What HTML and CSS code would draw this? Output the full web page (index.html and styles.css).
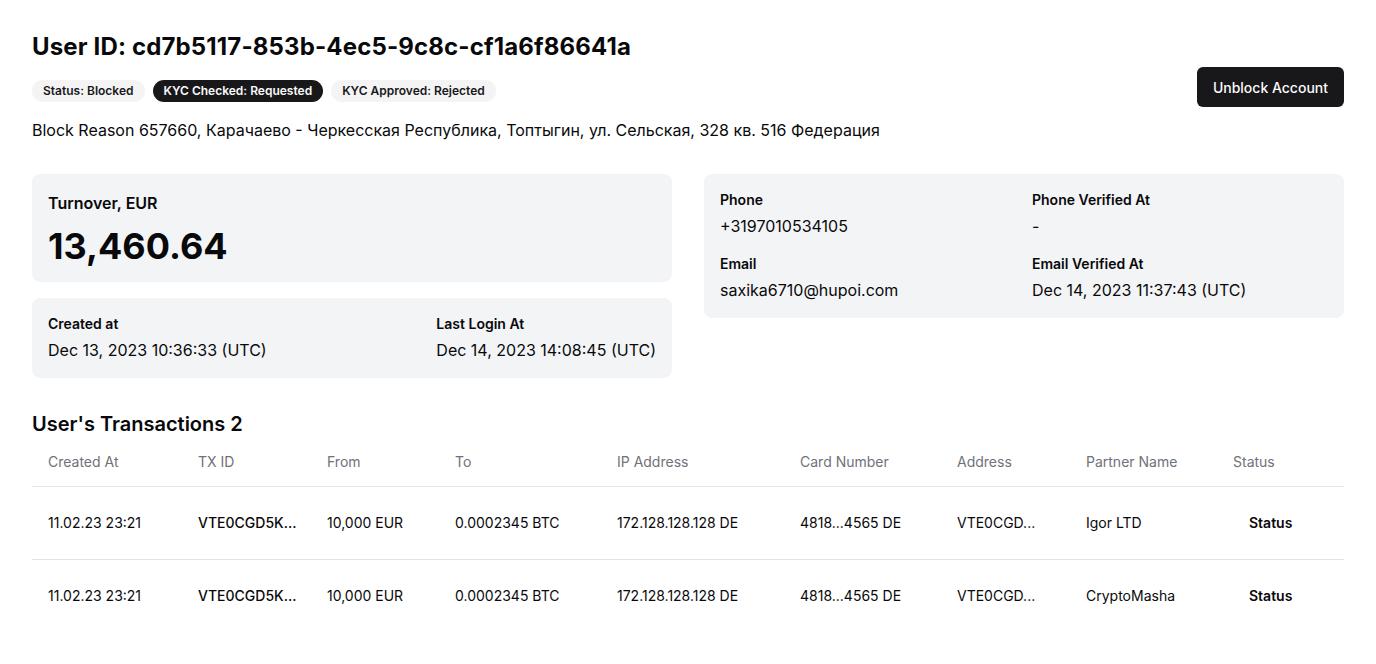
FILE: index.html
```html
<!DOCTYPE html>
<html lang="en">
<head>
<meta charset="utf-8">
<title>User</title>
<link rel="stylesheet" href="styles.css">
</head>
<body>
<main class="page">
  <header class="header">
    <div class="header-info">
      <h1 class="title">User ID: cd7b5117-853b-4ec5-9c8c-cf1a6f86641a</h1>
      <div class="badges">
        <span class="badge">Status: Blocked</span>
        <span class="badge badge-dark">KYC Checked: Requested</span>
        <span class="badge">KYC Approved: Rejected</span>
      </div>
      <p class="reason">Block Reason 657660, Карачаево - Черкесская Республика, Топтыгин, ул. Сельская, 328 кв. 516 Федерация</p>
    </div>
    <button class="btn-primary">Unblock Account</button>
  </header>

  <section class="cards">
    <div class="col">
      <div class="card card-turnover">
        <div class="turnover-label">Turnover, EUR</div>
        <div class="turnover-value">13,460.64</div>
      </div>
      <div class="card card-dates">
        <div class="field">
          <div class="label">Created at</div>
          <div class="value">Dec 13, 2023 10:36:33 (UTC)</div>
        </div>
        <div class="field">
          <div class="label">Last Login At</div>
          <div class="value">Dec 14, 2023 14:08:45 (UTC)</div>
        </div>
      </div>
    </div>
    <div class="col">
      <div class="card card-grid">
        <div class="field">
          <div class="label">Phone</div>
          <div class="value">+3197010534105</div>
        </div>
        <div class="field">
          <div class="label">Phone Verified At</div>
          <div class="value">-</div>
        </div>
        <div class="field">
          <div class="label">Email</div>
          <div class="value">saxika6710@hupoi.com</div>
        </div>
        <div class="field">
          <div class="label">Email Verified At</div>
          <div class="value">Dec 14, 2023 11:37:43 (UTC)</div>
        </div>
      </div>
    </div>
  </section>

  <h2 class="section-title">User's Transactions 2</h2>
  <table class="tx">
    <colgroup>
      <col class="c1"><col class="c2"><col class="c3"><col class="c4"><col class="c5"><col class="c6"><col class="c7"><col class="c8"><col class="c9">
    </colgroup>
    <thead>
      <tr>
        <th>Created At</th><th>TX ID</th><th>From</th><th>To</th><th>IP Address</th><th>Card Number</th><th>Address</th><th>Partner Name</th><th>Status</th>
      </tr>
    </thead>
    <tbody>
      <tr>
        <td>11.02.23 23:21</td><td class="strong">VTE0CGD5K...</td><td>10,000 EUR</td><td>0.0002345 BTC</td><td>172.128.128.128 DE</td><td>4818...4565 DE</td><td>VTE0CGD...</td><td>Igor LTD</td><td class="status-cell"><button class="btn-ghost">Status</button></td>
      </tr>
      <tr>
        <td>11.02.23 23:21</td><td class="strong">VTE0CGD5K...</td><td>10,000 EUR</td><td>0.0002345 BTC</td><td>172.128.128.128 DE</td><td>4818...4565 DE</td><td>VTE0CGD...</td><td>CryptoMasha</td><td class="status-cell"><button class="btn-ghost">Status</button></td>
      </tr>
    </tbody>
  </table>
</main>
</body>
</html>
```

FILE: styles.css
```css
* { box-sizing: border-box; }
html, body { margin: 0; padding: 0; background: #ffffff; }
body {
  font-family: Inter, "Noto Sans", "DejaVu Sans", sans-serif;
  color: #09090b;
  font-size: 16px;
  line-height: 24px;
}
.page { padding: 32px 32px 0 32px; }

.header { display: flex; align-items: center; justify-content: space-between; }
.title { margin: 0; font-size: 24px; line-height: 30px; font-weight: 700; letter-spacing: 0.15px; }
.badges { display: flex; gap: 8px; margin-top: 18px; }
.badge {
  display: inline-flex; align-items: center;
  height: 22px; padding: 0 11px; border-radius: 999px;
  background: #f4f4f5; color: #18181b;
  font-size: 12px; font-weight: 600; line-height: 16px;
}
.badge-dark { background: #18181b; color: #fafafa; }
.reason { margin: 16px 0 0; font-size: 16px; line-height: 24px; }

.btn-primary {
  height: 40px; padding: 0 16px; border: 0; border-radius: 6px;
  background: #18181b; color: #fafafa;
  font-family: inherit; font-size: 14px; font-weight: 500;
}

.cards { display: grid; grid-template-columns: 1fr 1fr; gap: 32px; margin-top: 32px; align-items: start; }
.col { display: flex; flex-direction: column; gap: 16px; }
.card { background: #f3f4f6; border-radius: 8px; padding: 16px; }
.turnover-label { font-size: 16px; line-height: 24px; font-weight: 600; padding-top: 1px; }
.turnover-value { margin-top: 11px; font-size: 36px; line-height: 40px; font-weight: 700; }

.card-dates { display: flex; justify-content: space-between; }
.card-grid { display: grid; grid-template-columns: 1fr 1fr; column-gap: 16px; row-gap: 16px; }
.field { display: flex; flex-direction: column; gap: 4px; }
.label { font-size: 14px; line-height: 20px; font-weight: 600; }
.value { font-size: 16px; line-height: 24px; }

.section-title { margin: 32px 0 0; font-size: 20px; line-height: 28px; font-weight: 600; }

.tx { width: 100%; border-collapse: collapse; table-layout: fixed; font-size: 14px; line-height: 20px; }
.c1 { width: 150px; } .c2 { width: 129px; } .c3 { width: 128px; } .c4 { width: 162px; }
.c5 { width: 183px; } .c6 { width: 157px; } .c7 { width: 129px; } .c8 { width: 147px; } .c9 { width: 127px; }
.tx th {
  height: 48px; padding: 0 16px; text-align: left; vertical-align: middle;
  font-weight: 400; color: #71717a; border-bottom: 1px solid #e4e4e7;
}
.tx td { padding: 16px; vertical-align: middle; white-space: nowrap; }
.tx tbody tr { border-bottom: 1px solid #e4e4e7; }
.tx tbody tr:last-child { border-bottom: 0; }
.tx td.strong { font-weight: 500; }
.tx td.status-cell { padding: 16px 0 16px 16px; }
.btn-ghost {
  height: 40px; padding: 0 16px; border: 0; border-radius: 6px; background: transparent;
  color: #09090b; font-family: inherit; font-size: 14px; font-weight: 600;
}
```
